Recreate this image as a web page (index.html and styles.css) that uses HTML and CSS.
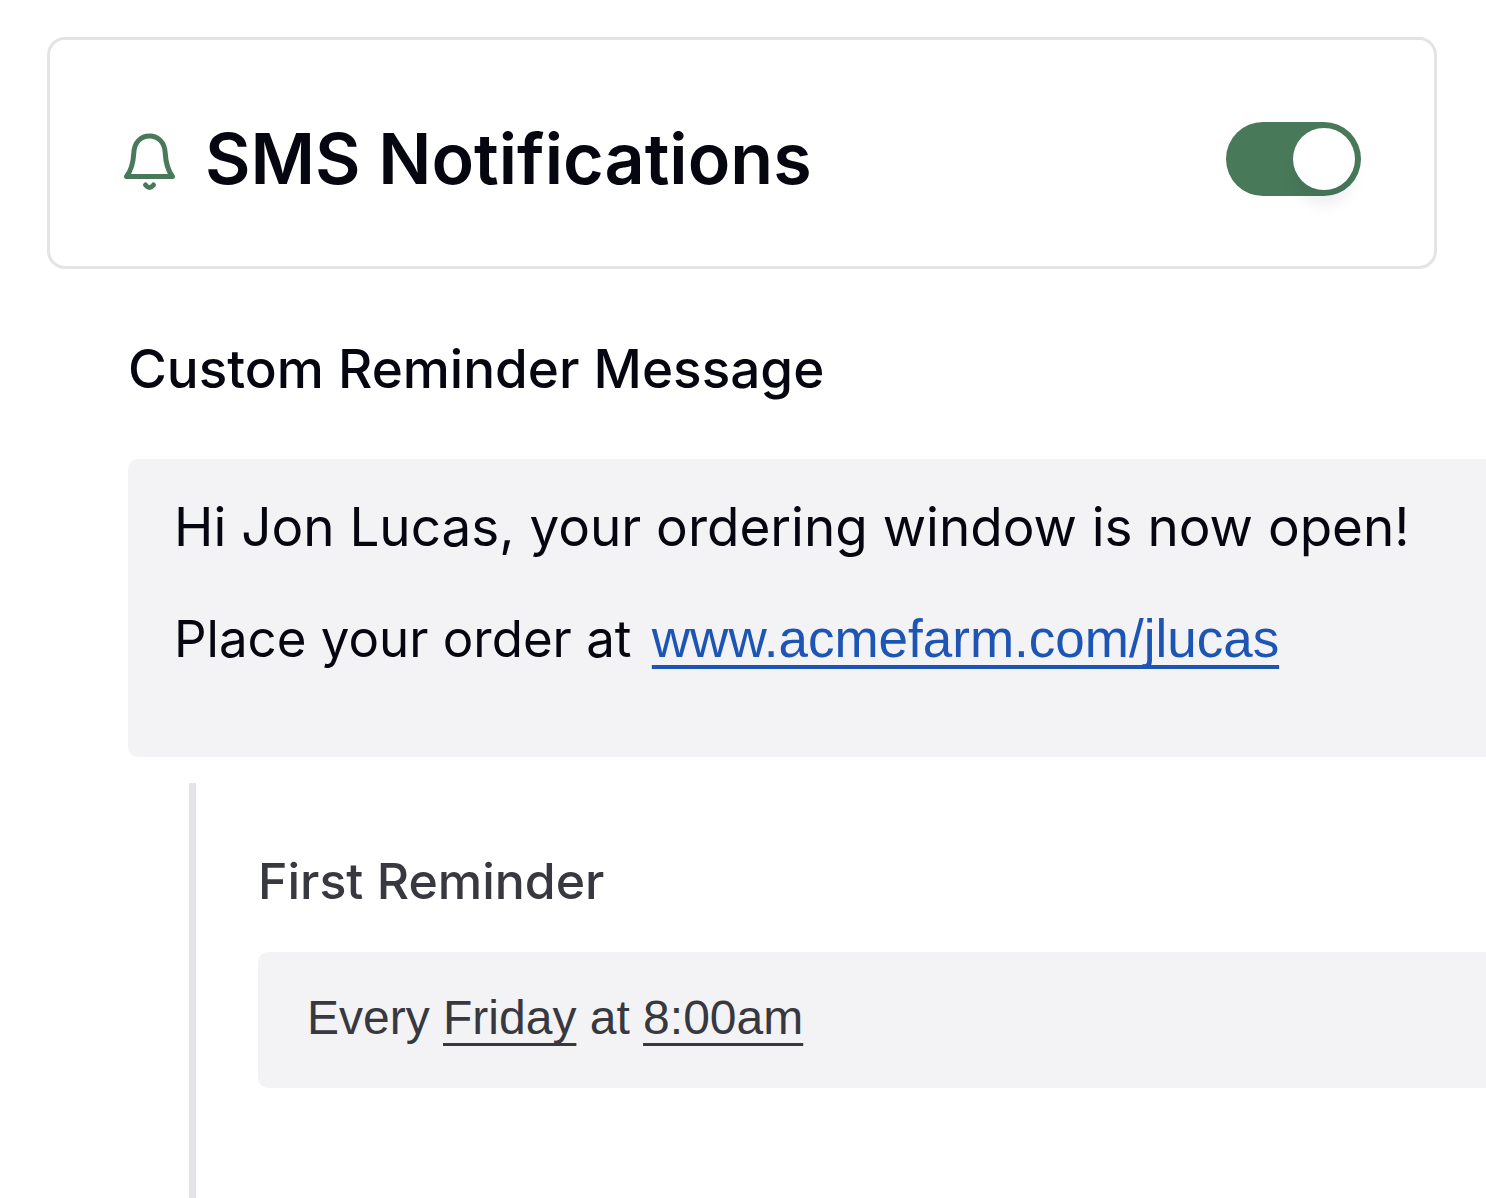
FILE: index.html
```html
<!DOCTYPE html>
<html lang="en">
<head>
    <meta charset="UTF-8">
    <meta name="viewport" content="width=device-width, initial-scale=1.0">
    <title>SMS Notifications</title>
    <link rel="stylesheet" href="styles.css">
</head>
<body>
    <!-- SMS on/off card -->
    <header class="sms-card">
        <svg class="bell" viewBox="0 -6 52 64" aria-hidden="true">
            <path d="M2.500 43.500H48.500C43.500 37 41.800 31 41.200 20C40.700 9 34 3 25.500 3S10.300 9 9.800 20C9.200 31 7.500 37 2.500 43.500Z" />
            <path d="M21.500 52Q25.500 57 29.500 52" />
        </svg>
        <h1><label for="smsToggle">SMS Notifications</label></h1>
        <input type="checkbox" id="smsToggle" class="toggle" role="switch" checked>
    </header>

    <!-- Reminder message -->
    <main class="settings">
        <h2>Custom Reminder Message</h2>
        <div class="message">
            <p>Hi Jon Lucas, your ordering window is now open!</p>
            <p class="order">Place your order at <a href="#">www.acmefarm.com/jlucas</a></p>
        </div>

        <!-- Reminder schedule -->
        <section class="schedule">
            <h3>First Reminder</h3>
            <p class="time">Every <u>Friday</u> at <u>8:00am</u></p>
        </section>
    </main>
</body>
</html>
```

FILE: styles.css
```css
* {
    box-sizing: border-box;
}

body {
    display: flex;
    flex-direction: column;
    min-height: 100vh;
    margin: 0;
    background-color: #fff;
    color: #05060f;
    font-family: Inter, sans-serif;
}

h1,
h2,
h3,
p {
    margin: 0;
}

/* SMS card */
.sms-card {
    display: flex;
    align-items: center;
    min-height: 232px;
    margin: 37px 49px 0 47px;
    padding: 11px 73px 0 74px;
    border: 3px solid #e4e4e7;
    border-radius: 18px;
}

.bell {
    width: 52px;
    height: 64px;
    margin-right: 29px;
    fill: none;
    stroke: #487a59;
    stroke-width: 5;
    stroke-linecap: round;
    stroke-linejoin: round;
}

h1 {
    font-size: 70px;
    font-weight: 600;
}

/* Switch */
.toggle {
    appearance: none;
    width: 135px;
    height: 74px;
    margin: 0 0 0 auto;
    padding: 6px;
    border-radius: 37px;
    background-color: #487a59;
    cursor: pointer;
}

.toggle::before {
    content: "";
    display: block;
    width: 62px;
    height: 62px;
    border-radius: 50%;
    background-color: #fff;
    box-shadow: 0 16px 14px rgba(20, 20, 60, 0.06);
}

.toggle:checked::before {
    margin-left: auto;
}

/* Settings */
.settings {
    display: flex;
    flex: 1;
    flex-direction: column;
    padding: 68px 0 0 128px;
}

h2 {
    font-size: 53px;
    font-weight: 500;
    line-height: 64px;
}

.message {
    min-height: 298px;
    margin-top: 58px;
    padding: 12px 46px;
    border-radius: 10px 0 0 10px;
    background-color: #f3f3f5;
    font-size: 53px;
    line-height: 112px;
}

.order {
    font-size: 51px;
}

.message a {
    margin-left: 6px;
    color: #1d55b5;
    font-family: "Liberation Sans", Arial, sans-serif;
    font-size: 53px;
    line-height: 64px;
    text-decoration-thickness: 4px;
    text-underline-offset: 8px;
    text-decoration-skip-ink: none;
}

/* Schedule */
.schedule {
    flex: 1;
    margin: 26px 0 0 61px;
    padding: 66px 0 0 62px;
    border-left: 7px solid #e4e4e8;
    color: #383840;
}

h3 {
    font-size: 50px;
    font-weight: 500;
    line-height: 64px;
}

.time {
    margin-top: 39px;
    padding: 30px 49px 34px;
    border-radius: 10px 0 0 10px;
    background-color: #f3f3f5;
    font-family: "Liberation Sans", Arial, sans-serif;
    font-size: 48px;
    line-height: 72px;
}

.time u {
    text-decoration-thickness: 3px;
    text-underline-offset: 9px;
    text-decoration-skip-ink: none;
}
```
